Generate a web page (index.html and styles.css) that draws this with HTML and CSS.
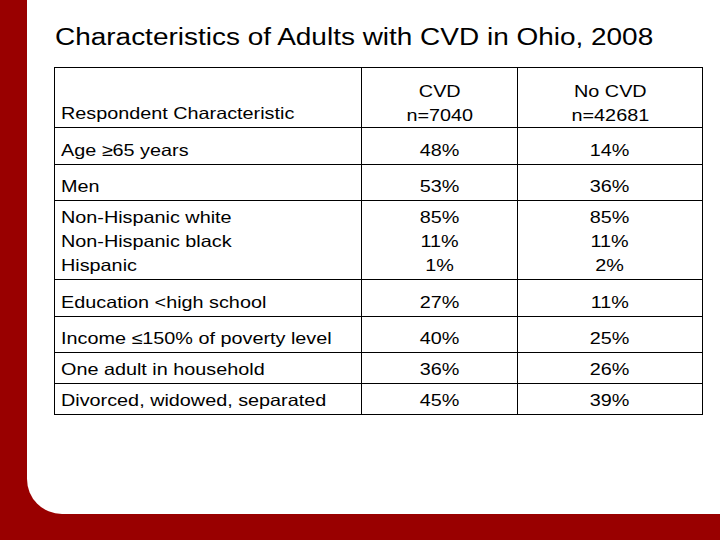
FILE: index.html
```html
<!DOCTYPE html>
<html lang="en">
<head>
<meta charset="utf-8">
<title>Characteristics of Adults with CVD in Ohio, 2008</title>
<link rel="stylesheet" href="styles.css">
</head>
<body>
<div class="slide">
  <h1 class="title"><span class="sx">Characteristics of Adults with CVD in Ohio, 2008</span></h1>
  <div class="tbl">
    <div class="c l h"><span class="sx">Respondent Characteristic</span></div>
    <div class="c m h"><span class="sx">CVD<br>n=7040</span></div>
    <div class="c m h"><span class="sx">No CVD<br>n=42681</span></div>

    <div class="c l"><span class="sx">Age ≥65 years</span></div>
    <div class="c m"><span class="sx">48%</span></div>
    <div class="c m"><span class="sx">14%</span></div>

    <div class="c l"><span class="sx">Men</span></div>
    <div class="c m"><span class="sx">53%</span></div>
    <div class="c m"><span class="sx">36%</span></div>

    <div class="c l"><span class="sx">Non-Hispanic white<br>Non-Hispanic black<br>Hispanic</span></div>
    <div class="c m"><span class="sx">85%<br>11%<br>1%</span></div>
    <div class="c m"><span class="sx">85%<br>11%<br>2%</span></div>

    <div class="c l"><span class="sx">Education &lt;high school</span></div>
    <div class="c m"><span class="sx">27%</span></div>
    <div class="c m"><span class="sx">11%</span></div>

    <div class="c l"><span class="sx">Income ≤150% of poverty level</span></div>
    <div class="c m"><span class="sx">40%</span></div>
    <div class="c m"><span class="sx">25%</span></div>

    <div class="c l"><span class="sx">One adult in household</span></div>
    <div class="c m"><span class="sx">36%</span></div>
    <div class="c m"><span class="sx">26%</span></div>

    <div class="c l"><span class="sx">Divorced, widowed, separated</span></div>
    <div class="c m"><span class="sx">45%</span></div>
    <div class="c m"><span class="sx">39%</span></div>
  </div>
</div>
</body>
</html>
```
FILE: styles.css
```css
html, body {
  margin: 0;
  padding: 0;
}

body {
  width: 720px;
  height: 540px;
  overflow: hidden;
  background: #990000;
  font-family: "Liberation Sans", Arial, sans-serif;
  color: #000;
}

.slide {
  box-sizing: border-box;
  margin-left: 27px;
  height: 514px;
  background: #fff;
  border-bottom-left-radius: 35px;
  padding: 23px 0 0 28px;
}

.title {
  margin: 0;
  font-weight: normal;
  font-size: 23.3px;
  line-height: 28px;
}

.sx {
  display: inline-block;
  white-space: nowrap;
  transform: scaleX(1.2);
  transform-origin: 0 50%;
}

.tbl {
  display: grid;
  width: max-content;
  margin: 16px 0 0 -1px;
  grid-template-columns: 307px 156px 185px;
  grid-template-rows: 60px 37px 36px 79px 37px 36px 31px 31px;
  border-top: 1px solid #000;
  border-left: 1px solid #000;
  font-size: 16.5px;
  line-height: 24px;
}

.c {
  box-sizing: border-box;
  display: flex;
  align-items: flex-end;
  padding: 0 6px 2px 6px;
  border-right: 1px solid #000;
  border-bottom: 1px solid #000;
}

.m {
  justify-content: center;
  text-align: center;
}

.m .sx {
  transform-origin: 50% 50%;
}

.h.m {
  padding-bottom: 0;
}
```
